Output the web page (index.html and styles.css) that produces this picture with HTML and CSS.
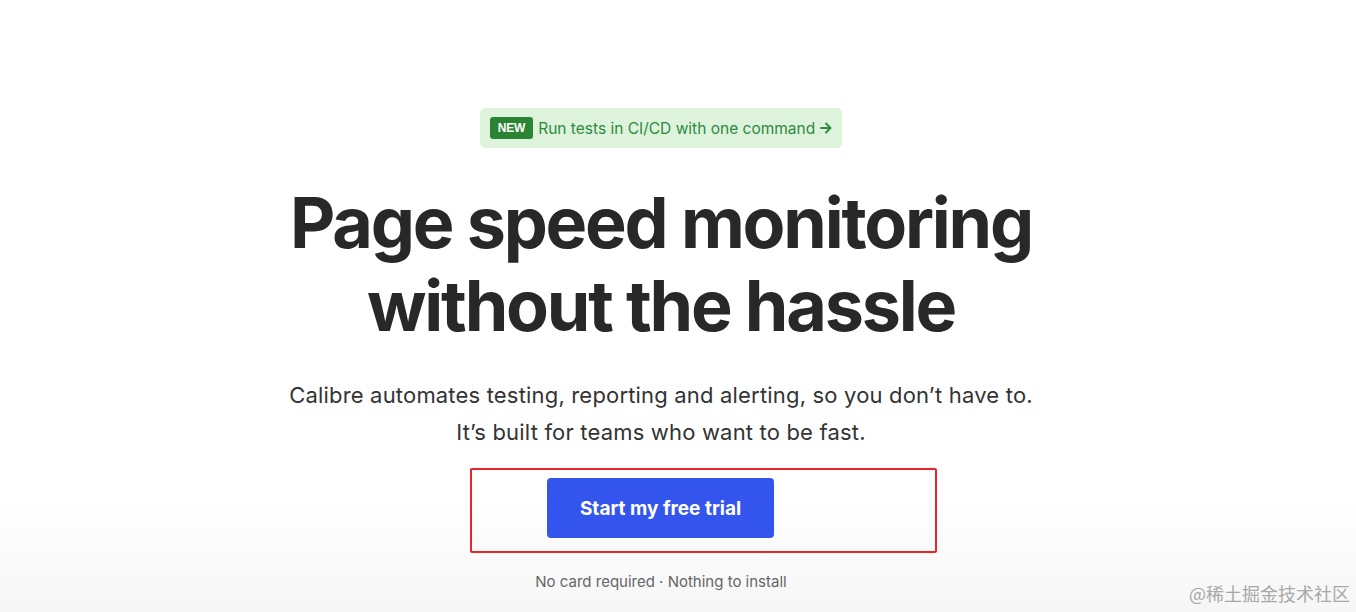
FILE: index.html
```html
<!DOCTYPE html>
<html lang="en">
<head>
    <meta charset="UTF-8">
    <meta name="viewport" content="width=device-width, initial-scale=1.0">
    <title>Calibre</title>
    <link rel="stylesheet" href="styles.css">
</head>
<body>
    <main class="hero">
        <a class="announce" href="#">
            <span class="announce-tag">NEW</span>
            <span class="announce-text">Run tests in CI/CD with one command</span>
            <svg class="announce-arrow" width="14" height="14" viewBox="0 0 14 14" aria-hidden="true">
                <path d="M2 7h9M7 2.5 11.5 7 7 11.5" fill="none" stroke="currentColor" stroke-width="2" stroke-linecap="round" stroke-linejoin="round"/>
            </svg>
        </a>
        <h1 class="title">Page speed monitoring<br>without the hassle</h1>
        <p class="lead">Calibre automates testing, reporting and alerting, so you don’t have to.<br>It’s built for teams who want to be fast.</p>
        <div class="cta">
            <a class="button" href="#">Start my free trial</a>
        </div>
        <p class="note">No card required · Nothing to install</p>
    </main>
    <div class="watermark">@稀土掘金技术社区</div>
</body>
</html>
```

FILE: styles.css
```css
body {
    margin: 0;
    padding: 0 34px 0 0;
    height: 612px;
    overflow: hidden;
    background: linear-gradient(to bottom, #fff 0, #fff 500px, #f6f6f6 612px);
    color: #2a2a2a;
    font-family: Inter, "Noto Sans", sans-serif;
}
.hero {
    display: flex;
    flex-direction: column;
    align-items: center;
    padding-top: 108px;
    text-align: center;
}
.announce {
    display: flex;
    align-items: center;
    gap: 5px;
    height: 40px;
    padding: 0 9px 0 10px;
    box-sizing: border-box;
    background: #ddf3dc;
    border-radius: 5px;
    color: #2e8a3c;
    text-decoration: none;
    font-size: 15.5px;
}
.announce-tag {
    background: #2a8433;
    color: #fff;
    font-family: "Liberation Sans", Arial, sans-serif;
    font-weight: 700;
    font-size: 12px;
    padding: 4px 8px;
    border-radius: 3px;
    letter-spacing: -0.2px;
}
.announce-arrow {
    margin-left: -1px;
}
.title {
    margin: 33px 0 0;
    font-size: 70px;
    line-height: 83px;
    font-weight: 700;
    letter-spacing: -2.2px;
    color: #282828;
}
.lead {
    margin: 30px 0 0;
    font-size: 22px;
    line-height: 37px;
    letter-spacing: 0.18px;
    color: #333;
}
.cta {
    display: flex;
    margin: 17px 0 0 85px;
    padding: 8px 161px 13px 75px;
    border: 2px solid #e8262a;
    border-radius: 2px;
}
.button {
    display: flex;
    align-items: center;
    justify-content: center;
    width: 227px;
    height: 60px;
    background: #3355ee;
    border-radius: 4px;
    color: #fff;
    text-decoration: none;
    font-size: 19px;
    font-weight: 700;
}
.note {
    margin: 19px 0 0;
    font-size: 15px;
    color: #666;
}
.watermark {
    position: absolute;
    right: 6px;
    bottom: 6px;
    color: #a8a8a8;
    font-family: "Noto Sans CJK SC", sans-serif;
    font-size: 18px;
}
```
